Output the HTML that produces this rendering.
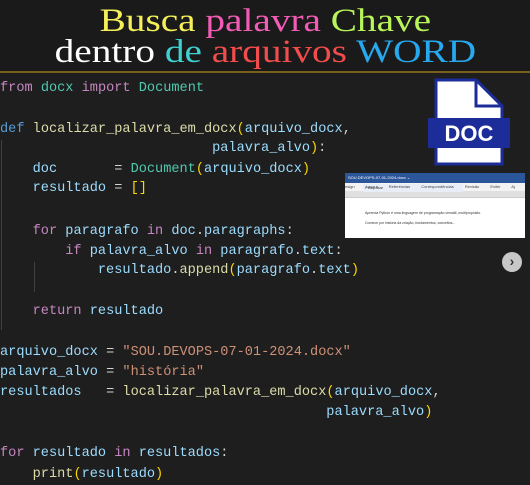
<!DOCTYPE html>
<html><head><meta charset="utf-8"><style>
body{margin:0;width:530px;height:485px;background:#1e1e1e;overflow:hidden;position:relative;font-family:"Liberation Mono",monospace}
.t{position:absolute;left:0;width:530px;text-align:center;font-family:"Liberation Serif",serif;font-size:33px;line-height:32px;white-space:nowrap;transform:scaleX(1.19);transform-origin:263px 0}
.l{position:absolute;left:0;font-size:13.6px;line-height:20px;white-space:pre;color:#9cdcfe}
.k{color:#c586c0}.d{color:#569cd6}.c{color:#4ec9b0}.f{color:#dcdcaa}.s{color:#ce9178}.p{color:#ffd700}.w{color:#d4d4d4}
.g{position:absolute;width:1px;background:#404040}
</style></head><body>
<div style="position:absolute;left:0;top:0;width:530px;height:72px;background:#1a1a1a"></div>
<div class="t" style="top:5px"><span style="color:#f5f05a">Busca</span> <span style="color:#f25cb5">palavra</span> <span style="color:#b9f55a">Chave</span></div>
<div class="t" style="top:36px"><span style="color:#fff">dentro</span> <span style="color:#3fd0d0">de</span> <span style="color:#f24c4c">arquivos</span> <span style="color:#27a9f0">WORD</span></div>
<div style="position:absolute;left:0;top:71px;width:530px;height:2px;background:#7a5e1c"></div>

<div class="g" style="left:1px;top:140px;height:190px"></div>
<div class="g" style="left:34px;top:262px;height:30px"></div>

<div class="l" style="top:79px"><span class="k">from</span> <span class="c">docx</span> <span class="k">import</span> <span class="c">Document</span></div>
<div class="l" style="top:120px"><span class="d">def</span> <span class="f">localizar_palavra_em_docx</span><span class="p">(</span>arquivo_docx<span class="w">,</span></div>
<div class="l" style="top:139px">                          palavra_alvo<span class="p">)</span><span class="w">:</span></div>
<div class="l" style="top:160px">    doc       <span class="w">=</span> <span class="c">Document</span><span class="p">(</span>arquivo_docx<span class="p">)</span></div>
<div class="l" style="top:179px">    resultado <span class="w">=</span> <span class="p">[]</span></div>
<div class="l" style="top:222px">    <span class="k">for</span> paragrafo <span class="k">in</span> doc<span class="w">.</span>paragraphs<span class="w">:</span></div>
<div class="l" style="top:242px">        <span class="k">if</span> palavra_alvo <span class="k">in</span> paragrafo<span class="w">.</span>text<span class="w">:</span></div>
<div class="l" style="top:261px">            resultado<span class="w">.</span><span class="f">append</span><span class="p">(</span>paragrafo<span class="w">.</span>text<span class="p">)</span></div>
<div class="l" style="top:302px">    <span class="k">return</span> resultado</div>
<div class="l" style="top:343px">arquivo_docx <span class="w">=</span> <span class="s">"SOU.DEVOPS-07-01-2024.docx"</span></div>
<div class="l" style="top:363px">palavra_alvo <span class="w">=</span> <span class="s">"história"</span></div>
<div class="l" style="top:383px">resultados   <span class="w">=</span> <span class="f">localizar_palavra_em_docx</span><span class="p">(</span>arquivo_docx<span class="w">,</span></div>
<div class="l" style="top:403px">                                        palavra_alvo<span class="p">)</span></div>
<div class="l" style="top:444px"><span class="k">for</span> resultado <span class="k">in</span> resultados<span class="w">:</span></div>
<div class="l" style="top:465px">    <span class="f">print</span><span class="p">(</span>resultado<span class="p">)</span></div>

<svg style="position:absolute;left:428px;top:78px" width="82" height="88" viewBox="0 0 82 88">
<path d="M8 2 H48 L74 28 V86 H8 Z" fill="#fff" stroke="#1c2d9a" stroke-width="3"/>
<path d="M48 2 V28 H74" fill="none" stroke="#1c2d9a" stroke-width="3"/>
<rect x="0" y="40" width="82" height="30" fill="#1c2d9a"/>
<text x="41" y="63" text-anchor="middle" font-family="Liberation Sans" font-weight="bold" font-size="22" fill="#fff">DOC</text>
</svg>

<div style="position:absolute;left:345px;top:173px;width:180px;height:65px;background:#fff;overflow:hidden;font-family:'Liberation Sans',sans-serif">
<div style="height:10px;background:#2b579a;font-size:4px;color:#fff;line-height:10px;padding-left:3px">SOU.DEVOPS-07-01-2024.docx ⌄<span style="display:inline-block;margin-left:15px;width:100px;height:8px;background:#e8eef8;color:#333;vertical-align:middle;line-height:8px">&nbsp;&nbsp;Pesquisar</span></div>
<div style="height:8px;background:#f3f3f3;font-size:4px;color:#444;line-height:8px;word-spacing:10px">esign Layout Referências Correspondências Revisão Exibir Aj</div>
<div style="height:6px;background:#e0e0e0;border-bottom:1px solid #ccc"></div>
<div style="font-size:3.5px;color:#333;padding:10px 0 0 20px;line-height:10px">Aprenda Python é uma linguagem de programação versátil, multipropósito.<br>Comece por história da criação, fundamentos, conceitos...</div>
</div>

<div style="position:absolute;left:502px;top:252px;width:20px;height:20px;border-radius:50%;background:#c8c8c8;color:#333;font-family:'Liberation Sans';font-weight:bold;font-size:14px;line-height:19px;text-align:center">›</div>
</body></html>
